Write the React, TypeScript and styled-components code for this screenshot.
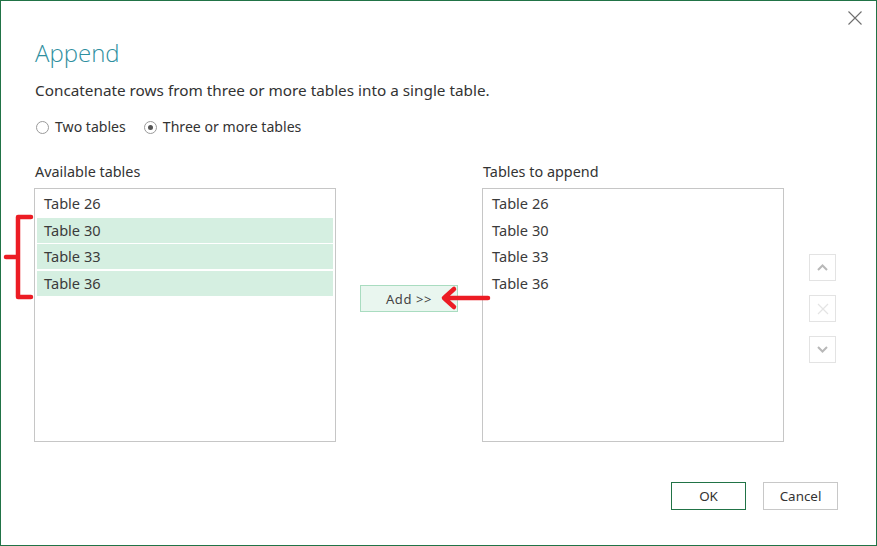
import styled, { createGlobalStyle } from 'styled-components';

const GlobalStyle = createGlobalStyle`
    html, body {
        margin: 0;
        padding: 0;
        background: #ffffff;
    }
    body {
        font-family: "Noto Sans", "Open Sans", sans-serif;
        color: #333333;
    }
`;

const Dialog = styled.div`
    position: relative;
    box-sizing: border-box;
    width: 877px;
    height: 546px;
    border: 1px solid #217346;
    padding: 36px 38px 0 33px;
    background: #ffffff;
`;

const CloseButton = styled.button`
    position: absolute;
    top: 9px;
    right: 13px;
    width: 16px;
    height: 16px;
    padding: 0;
    border: 0;
    background: transparent;
    cursor: pointer;
`;

const Title = styled.h1`
    margin: 0;
    font-family: "Open Sans", "Noto Sans", sans-serif;
    font-weight: 300;
    font-size: 24px;
    line-height: 31px;
    color: #2f8f9f;
    padding-left: 1px;
`;

const Subtitle = styled.p`
    margin: 12px 0 0 1px;
    font-size: 15.3px;
    line-height: 20px;
    color: #333;
`;

const RadioGroup = styled.div`
    display: flex;
    gap: 18px;
    margin: 17px 0 0 2px;
    font-size: 14.1px;
    line-height: 20px;
`;

const RadioLabel = styled.label`
    display: flex;
    align-items: center;
    gap: 6px;
    color: #333;
`;

const RadioDot = styled.span<{ checked?: boolean }>`
    box-sizing: border-box;
    width: 13px;
    height: 13px;
    border-radius: 50%;
    border: 1px solid #9a9a9a;
    display: flex;
    align-items: center;
    justify-content: center;

    &::after {
        content: '';
        width: 5px;
        height: 5px;
        border-radius: 50%;
        background: ${({ checked }) => (checked ? '#555' : 'transparent')};
    }
`;

const Body = styled.div`
    display: grid;
    grid-template-columns: 302px 146px 302px 27px;
    margin-top: 25px;
`;

const Column = styled.div`
    display: flex;
    flex-direction: column;
`;

const Label = styled.div`
    font-size: 14.4px;
    line-height: 20px;
    color: #333;
    padding-left: 1px;
`;

const ListBox = styled.div`
    box-sizing: border-box;
    margin-top: 6px;
    height: 254px;
    border: 1px solid #c6c6c6;
    padding: 2px;
    display: flex;
    flex-direction: column;
    gap: 1.5px;
`;

const Row = styled.div<{ selected?: boolean }>`
    height: 25px;
    line-height: 25px;
    padding-left: 7px;
    font-size: 14.6px;
    color: #3b3b3b;
    background: ${({ selected }) => (selected ? '#d5efe1' : 'transparent')};
`;

const Middle = styled.div`
    display: flex;
    justify-content: center;
    padding-top: 123px;
`;

const AddButton = styled.button`
    box-sizing: border-box;
    width: 98px;
    height: 27px;
    border: 1px solid #a9dcc0;
    background: #e9f6ef;
    font-family: "Noto Sans", "Open Sans", sans-serif;
    font-size: 13px;
    letter-spacing: 0.6px;
    color: #444;
    padding: 0;
    cursor: pointer;
`;

const SideButtons = styled.div`
    display: flex;
    flex-direction: column;
    gap: 14px;
    padding-top: 92px;
    margin-left: 25px;
`;

const SideButton = styled.button`
    box-sizing: border-box;
    width: 27px;
    height: 27px;
    border: 1px solid #e3e3e3;
    background: #ffffff;
    padding: 0;
    display: flex;
    align-items: center;
    justify-content: center;
`;

const Footer = styled.div`
    display: flex;
    justify-content: flex-end;
    gap: 17px;
    margin-top: 40px;
`;

const FooterButton = styled.button<{ primary?: boolean }>`
    box-sizing: border-box;
    width: 75px;
    height: 28px;
    background: #ffffff;
    border: 1px solid ${({ primary }) => (primary ? '#217346' : '#c8c8c8')};
    font-family: "Noto Sans", "Open Sans", sans-serif;
    font-size: 13.4px;
    color: #333;
    padding: 0;
    cursor: pointer;
`;

const Annotation = styled.svg`
    position: absolute;
    pointer-events: none;
    overflow: visible;
`;

const available = [
    { name: 'Table 26', selected: false },
    { name: 'Table 30', selected: true },
    { name: 'Table 33', selected: true },
    { name: 'Table 36', selected: true },
];

const toAppend = ['Table 26', 'Table 30', 'Table 33', 'Table 36'];

export default function App() {
    return (
        <>
            <GlobalStyle />
            <Dialog>
                <CloseButton aria-label="Close">
                    <svg width="16" height="16" viewBox="0 0 16 16">
                        <path d="M1.5 1.5 L14.5 14.5 M14.5 1.5 L1.5 14.5" stroke="#6e6e6e" strokeWidth="1.1" />
                    </svg>
                </CloseButton>

                <Title>Append</Title>
                <Subtitle>Concatenate rows from three or more tables into a single table.</Subtitle>

                <RadioGroup>
                    <RadioLabel>
                        <RadioDot />
                        Two tables
                    </RadioLabel>
                    <RadioLabel>
                        <RadioDot checked />
                        Three or more tables
                    </RadioLabel>
                </RadioGroup>

                <Body>
                    <Column>
                        <Label>Available tables</Label>
                        <ListBox>
                            {available.map((t) => (
                                <Row key={t.name} selected={t.selected}>{t.name}</Row>
                            ))}
                        </ListBox>
                    </Column>

                    <Middle>
                        <AddButton>Add &gt;&gt;</AddButton>
                    </Middle>

                    <Column>
                        <Label>Tables to append</Label>
                        <ListBox>
                            {toAppend.map((t) => (
                                <Row key={t}>{t}</Row>
                            ))}
                        </ListBox>
                    </Column>

                    <SideButtons>
                        <SideButton aria-label="Move up">
                            <svg width="11" height="7" viewBox="0 0 11 7">
                                <path d="M1 6 L5.5 1.5 L10 6" fill="none" stroke="#b8b8b8" strokeWidth="2" />
                            </svg>
                        </SideButton>
                        <SideButton aria-label="Remove">
                            <svg width="12" height="12" viewBox="0 0 12 12">
                                <path d="M1 1 L11 11 M11 1 L1 11" stroke="#e4e4e4" strokeWidth="1.2" />
                            </svg>
                        </SideButton>
                        <SideButton aria-label="Move down">
                            <svg width="11" height="7" viewBox="0 0 11 7">
                                <path d="M1 1 L5.5 5.5 L10 1" fill="none" stroke="#b8b8b8" strokeWidth="2" />
                            </svg>
                        </SideButton>
                    </SideButtons>
                </Body>

                <Footer>
                    <FooterButton primary>OK</FooterButton>
                    <FooterButton>Cancel</FooterButton>
                </Footer>

                {/* red call-out bracket beside the selection */}
                <Annotation width="30" height="86" viewBox="0 0 30 86" style={{ left: 3, top: 213 }}>
                    <path
                        d="M27 3 L14 3 L14 83 L27 83 M2 43 L14 43"
                        fill="none"
                        stroke="#ec1c24"
                        strokeWidth="4.5"
                        strokeLinecap="round"
                        strokeLinejoin="round"
                    />
                </Annotation>

                {/* red arrow pointing at the Add button */}
                <Annotation width="50" height="26" viewBox="0 0 50 26" style={{ left: 440, top: 284 }}>
                    <path
                        d="M47 13 L4 13 M13 4 L3 13 L13 22"
                        fill="none"
                        stroke="#ec1c24"
                        strokeWidth="4.5"
                        strokeLinecap="round"
                        strokeLinejoin="round"
                    />
                </Annotation>
            </Dialog>
        </>
    );
}
